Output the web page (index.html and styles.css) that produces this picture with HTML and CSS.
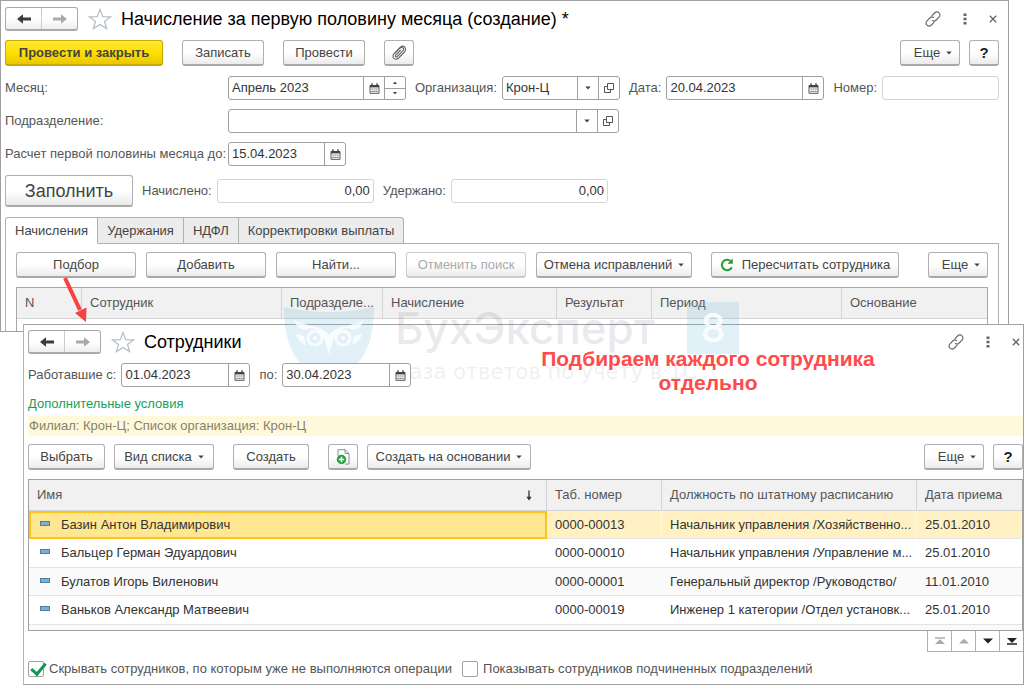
FILE: index.html
```html
<!DOCTYPE html>
<html lang="ru">
<head>
<meta charset="utf-8">
<title>Начисление за первую половину месяца</title>
<link rel="stylesheet" href="styles.css">
</head>
<body>
<svg class="sprite" aria-hidden="true">
  <symbol id="i-left" viewBox="0 0 16 12"><path d="M1 6 7 1.2V4.6H15V7.4H7V10.8Z" fill="currentColor"/></symbol>
  <symbol id="i-right" viewBox="0 0 16 12"><path d="M15 6 9 1.2V4.6H1V7.4H9V10.8Z" fill="currentColor"/></symbol>
  <symbol id="i-star" viewBox="0 0 24 22"><path d="M12 1.5 14.8 8.6 22.4 8.9 16.5 13.5 18.6 20.6 12 16.5 5.4 20.6 7.5 13.5 1.6 8.9 9.2 8.6Z" fill="none" stroke="#b4bcc4" stroke-width="1.2"/></symbol>
  <symbol id="i-cal" viewBox="0 0 11 11"><path d="M1 2.5H10V10.3H1Z" fill="none" stroke="#555"/><path d="M1 2H10V4.4H1Z" fill="#444"/><path d="M3 .3V3M8 .3V3" stroke="#444" stroke-width="1.4"/><path d="M2.5 6H9M2.5 8.3H9" stroke="#555" stroke-width="1.2" stroke-dasharray="1.2 .8"/></symbol>
  <symbol id="i-open" viewBox="0 0 10 10"><path d="M3.5 .5H9.5V6.5H3.5Z" fill="none" stroke="#555"/><path d="M3.5 3.5H.5V9.5H6.5V6.5" fill="none" stroke="#555"/></symbol>
  <symbol id="i-down" viewBox="0 0 6 4"><path d="M.3 .4H5.7L3 3.6Z" fill="#444"/></symbol>
  <symbol id="i-link" viewBox="0 0 16 16"><g fill="none" stroke="#6a6a6a" stroke-width="1.2" stroke-linecap="round"><path d="M7 4.6 9.6 2C11 .6 12.8.6 14 1.9 15.3 3.1 15.3 4.9 14 6.2L11.2 9C10 10.2 8.6 10.3 7.4 9.6"/><path d="M9 11.4 6.4 14C5 15.4 3.2 15.4 2 14.1.7 12.9.7 11.1 2 9.8L4.8 7C6 5.8 7.4 5.7 8.6 6.4"/></g></symbol>
  <symbol id="i-dots" viewBox="0 0 4 12"><path d="M.5 .5H3.5V3H.5ZM.5 4.8H3.5V7.3H.5ZM.5 9.1H3.5V11.6H.5Z" fill="#666"/></symbol>
  <symbol id="i-x" viewBox="0 0 8 8"><path d="M.8 .8 7.2 7.2M7.2 .8 .8 7.2" stroke="#666" stroke-width="1.3"/></symbol>
</svg>

<main class="desktop">
  <section class="window doc">
    <header class="titlebar">
      <div class="nav"><button aria-label="Назад"><svg><use href="#i-left"/></svg></button><button class="off" aria-label="Вперед"><svg><use href="#i-right"/></svg></button></div>
      <svg class="star"><use href="#i-star"/></svg>
      <h1>Начисление за первую половину месяца (создание) *</h1>
      <div class="tools">
        <button aria-label="Ссылка"><svg class="link"><use href="#i-link"/></svg></button>
        <button aria-label="Меню"><svg class="dots"><use href="#i-dots"/></svg></button>
        <button aria-label="Закрыть"><svg class="x"><use href="#i-x"/></svg></button>
      </div>
    </header>

    <div class="bar doc-bar">
      <button class="btn primary">Провести и закрыть</button>
      <button class="btn">Записать</button>
      <button class="btn">Провести</button>
      <button class="btn icon" aria-label="Файлы"><svg width="16" height="16" viewBox="0 0 16 16"><path d="M3.6 8.7 9 3.2C11.2 1.1 13.9 3.7 11.9 5.9L6.2 11.5C5 12.6 3.6 11.2 4.7 10.1L9.8 5M13.6 7 7.6 13C4.2 16 .2 12.2 3 8.7L9.3 2.2C12.6-.6 16.2 3.2 13.6 7" fill="none" stroke="#666" stroke-width="1.1"/></svg></button>
      <span class="push"></span>
      <button class="btn more">Еще<svg class="caret"><use href="#i-down"/></svg></button>
      <button class="btn icon help">?</button>
    </div>

    <div class="row">
      <label class="lead" for="month">Месяц:</label>
      <div class="field w-month"><input id="month" value="Апрель 2023"><button aria-label="Календарь"><svg class="cal"><use href="#i-cal"/></svg></button><span class="spin"><button aria-label="Больше"><svg viewBox="0 0 4 3"><path d="M0 3H4L2 .5Z" fill="#444"/></svg></button><button aria-label="Меньше"><svg viewBox="0 0 4 3"><path d="M0 0H4L2 2.5Z" fill="#444"/></svg></button></span></div>
      <label for="org">Организация:</label>
      <div class="field w-org"><input id="org" value="Крон-Ц"><button aria-label="Список"><svg class="caret"><use href="#i-down"/></svg></button><button aria-label="Открыть"><svg class="open"><use href="#i-open"/></svg></button></div>
      <label for="date">Дата:</label>
      <div class="field w-date"><input id="date" value="20.04.2023"><button aria-label="Календарь"><svg class="cal"><use href="#i-cal"/></svg></button></div>
      <label for="num">Номер:</label>
      <div class="field pale grow"><input id="num"></div>
    </div>
    <div class="row">
      <label class="lead" for="dep">Подразделение:</label>
      <div class="field w-dep"><input id="dep"><button aria-label="Список"><svg class="caret"><use href="#i-down"/></svg></button><button aria-label="Открыть"><svg class="open"><use href="#i-open"/></svg></button></div>
    </div>
    <div class="row">
      <label class="lead" for="till">Расчет первой половины месяца до:</label>
      <div class="field w-till"><input id="till" value="15.04.2023"><button aria-label="Календарь"><svg class="cal"><use href="#i-cal"/></svg></button></div>
    </div>
    <div class="row totals">
      <button class="btn big">Заполнить</button>
      <label for="acc">Начислено:</label>
      <div class="field pale w-sum"><input id="acc" value="0,00"></div>
      <label for="ded">Удержано:</label>
      <div class="field pale w-sum"><input id="ded" value="0,00"></div>
    </div>

    <div class="tabs" role="tablist">
      <button role="tab" aria-selected="true">Начисления</button><button role="tab">Удержания</button><button role="tab">НДФЛ</button><button role="tab">Корректировки выплаты</button>
    </div>
    <div class="panel">
      <div class="bar panel-bar">
        <button class="btn wide">Подбор</button>
        <button class="btn wide">Добавить</button>
        <button class="btn wide">Найти...</button>
        <button class="btn wide" disabled>Отменить поиск</button>
        <button class="btn fix">Отмена исправлений<svg class="caret"><use href="#i-down"/></svg></button>
        <button class="btn recalc"><svg width="14" height="14" viewBox="0 0 14 14"><path d="M11.8 9.2A5.2 5.2 0 1 1 10.5 3" fill="none" stroke="#27a030" stroke-width="2"/><path d="M12.8 .4V5.8H7.4Z" fill="#27a030"/></svg>Пересчитать сотрудника</button>
        <span class="push"></span>
        <button class="btn more">Еще<svg class="caret"><use href="#i-down"/></svg></button>
      </div>
      <div class="sheet">
        <table class="accruals">
          <colgroup><col class="a1"><col class="a2"><col class="a3"><col class="a4"><col class="a5"><col class="a6"><col></colgroup>
          <thead><tr><th>N</th><th>Сотрудник</th><th>Подразделе...</th><th>Начисление</th><th>Результат</th><th>Период</th><th>Основание</th></tr></thead>
        </table>
      </div>
    </div>
  </section>

  <section class="window picker">
    <header class="titlebar">
      <div class="nav"><button aria-label="Назад"><svg><use href="#i-left"/></svg></button><button class="off" aria-label="Вперед"><svg><use href="#i-right"/></svg></button></div>
      <svg class="star"><use href="#i-star"/></svg>
      <h2>Сотрудники</h2>
      <div class="tools">
        <button aria-label="Ссылка"><svg class="link"><use href="#i-link"/></svg></button>
        <button aria-label="Меню"><svg class="dots"><use href="#i-dots"/></svg></button>
        <button aria-label="Закрыть"><svg class="x"><use href="#i-x"/></svg></button>
      </div>
    </header>
    <div class="row period">
      <label for="from">Работавшие с:</label>
      <div class="field w-day"><input id="from" value="01.04.2023"><button aria-label="Календарь"><svg class="cal"><use href="#i-cal"/></svg></button></div>
      <label for="to">по:</label>
      <div class="field w-day"><input id="to" value="30.04.2023"><button aria-label="Календарь"><svg class="cal"><use href="#i-cal"/></svg></button></div>
    </div>
    <a class="extra" href="#">Дополнительные условия</a>
    <p class="filter">Филиал: Крон-Ц; Список организация: Крон-Ц</p>
    <div class="bar picker-bar">
      <button class="btn">Выбрать</button>
      <button class="btn view">Вид списка<svg class="caret"><use href="#i-down"/></svg></button>
      <button class="btn">Создать</button>
      <button class="btn icon" aria-label="Создать копированием"><svg width="16" height="16" viewBox="0 0 16 16"><path d="M3 7V.7H10L14 4.5V15H10" fill="#fff" stroke="#7890a0"/><path d="M10 .7V4.5H14" fill="none" stroke="#7890a0"/><circle cx="6.5" cy="10.5" r="4.7" fill="#27a03c"/><path d="M6.5 7.8V13.2M3.8 10.5H9.2" stroke="#fff" stroke-width="1.6"/></svg></button>
      <button class="btn based">Создать на основании<svg class="caret"><use href="#i-down"/></svg></button>
      <span class="push"></span>
      <button class="btn more">Еще<svg class="caret"><use href="#i-down"/></svg></button>
      <button class="btn icon help">?</button>
    </div>
    <div class="list">
      <table class="staff">
        <colgroup><col><col class="s2"><col class="s3"><col class="s4"></colgroup>
        <thead><tr><th><span class="sorted">Имя<svg width="8" height="11" viewBox="0 0 8 11"><path d="M4 .5V9" stroke="#333" stroke-width="1.3"/><path d="M1.3 6.8H6.7L4 10.5Z" fill="#333"/></svg></span></th><th>Таб. номер</th><th>Должность по штатному расписанию</th><th>Дата приема</th></tr></thead>
        <tbody>
          <tr class="current"><td><i class="mark"></i>Базин Антон Владимирович</td><td>0000-00013</td><td>Начальник управления /Хозяйственно...</td><td>25.01.2010</td></tr>
          <tr><td><i class="mark"></i>Бальцер Герман Эдуардович</td><td>0000-00010</td><td>Начальник управления /Управление м...</td><td>25.01.2010</td></tr>
          <tr><td><i class="mark"></i>Булатов Игорь Виленович</td><td>0000-00001</td><td>Генеральный директор /Руководство/</td><td>11.01.2010</td></tr>
          <tr><td><i class="mark"></i>Ваньков Александр Матвеевич</td><td>0000-00019</td><td>Инженер 1 категории /Отдел установк...</td><td>25.01.2010</td></tr>
        </tbody>
      </table>
    </div>
    <div class="pager">
      <button disabled aria-label="В начало"><svg viewBox="0 0 10 8"><path d="M0 1H10" stroke="#aaa" stroke-width="1.5"/><path d="M0 7H10L5 2.3Z" fill="#aaa"/></svg></button><button disabled aria-label="Вверх"><svg viewBox="0 0 10 8"><path d="M0 6.5H10L5 1.8Z" fill="#aaa"/></svg></button><button aria-label="Вниз"><svg viewBox="0 0 10 8"><path d="M0 1.5H10L5 6.5Z" fill="#222"/></svg></button><button aria-label="В конец"><svg viewBox="0 0 10 8"><path d="M0 7H10" stroke="#222" stroke-width="1.5"/><path d="M0 1H10L5 6Z" fill="#222"/></svg></button>
    </div>
    <div class="checks">
      <label><input type="checkbox" checked>Скрывать сотрудников, по которым уже не выполняются операции</label>
      <label><input type="checkbox">Показывать сотрудников подчиненных подразделений</label>
    </div>
  </section>

  <div class="watermark" aria-hidden="true">
    <svg width="90" height="76" viewBox="0 0 90 76"><path d="M0 0Q45 10 90 0C90 36 80 62 45 76 10 62 0 36 0 0Z" fill="#6db3dc" fill-opacity=".2"/><g fill="none" stroke="#fff" stroke-opacity=".8"><circle cx="31" cy="31" r="7" stroke-width="3"/><circle cx="59" cy="31" r="7" stroke-width="3"/></g><g fill="#fff" fill-opacity=".8"><path d="M10 13C22 20 36 17 45 28 54 17 68 20 80 13 77 20 73 23 69 23 61 18 52 24 49 34L45 48 41 34C38 24 29 18 21 23 16 22 12 19 10 13Z"/><path d="M12 27 20 29 22 38Q14 35 12 27ZM78 27 70 29 68 38Q76 35 78 27Z"/><circle cx="31" cy="31" r="2"/><circle cx="59" cy="31" r="2"/></g></svg>
    <div class="brand"><div class="name">БухЭксперт<span class="eight">8</span></div><div class="motto">База ответов по учету в 1С</div></div>
  </div>
  <p class="note">Подбираем каждого сотрудника отдельно</p>
  <svg class="arrow" width="30" height="48" viewBox="0 0 30 48" aria-hidden="true"><path d="M4 2 19 34" stroke="#f94144" stroke-width="4"/><path d="M14 37 25.5 31.5 25 46Z" fill="#f94144"/></svg>
</main>
</body>
</html>
```
FILE: styles.css
```css
* { box-sizing: border-box; }
body { margin: 0; background: #fff; color: #444; font: 13px/16px "Liberation Sans", Arial, sans-serif; }
button, input { font: inherit; color: inherit; margin: 0; }
button { display: flex; align-items: center; justify-content: center; padding: 0; border: 0; background: none; white-space: nowrap; }
button svg { flex-shrink: 0; }
h1, h2, p { margin: 0; }
label { color: #555; white-space: nowrap; }
.sprite { display: none; }

.desktop { position: relative; min-height: 100vh; overflow: hidden; }
.window { background: #fff; border: 1px solid #a0a0a0; }
.doc { margin-right: 15px; padding: 6px 9px 0 4px; }
.picker { position: absolute; top: 324px; left: 23px; right: 0; bottom: 0; padding: 5px 0 0 4px; border-left-color: #b4b4b4; }

.titlebar { display: flex; align-items: center; height: 24px; }
.titlebar h1, .titlebar h2 { flex: 1; color: #000; font-size: 18px; line-height: 24px; font-weight: 400; }
.nav { display: flex; width: 73px; height: 24px; border: 1px solid #aaa; border-bottom-width: 2px; border-radius: 3px; background: linear-gradient(#fff 50%, #eee); }
.nav button { flex: 1; color: #3c3c3c; }
.nav button + button { border-left: 1px solid #ccc; }
.nav .off { color: #aaa; }
.nav svg { width: 16px; height: 12px; }
.star { width: 24px; height: 22px; margin: 0 9px 0 10px; }
.tools { display: flex; align-items: center; gap: 22px; padding-right: 2px; }
.link { width: 16px; height: 16px; }
.dots { width: 4px; height: 12px; }
.x { width: 8px; height: 8px; }

.bar { display: flex; align-items: center; }
.push { flex: 1; }
.btn { height: 26px; padding: 0 12px; border: 1px solid #b0b0b0; border-bottom: 2px solid #a8a8a8; border-radius: 3px; background: linear-gradient(#fff 50%, #ebebeb); color: #444; }
.btn:disabled { color: #aaa; border-color: #ccc; }
.btn .caret { margin-left: 6px; }
.caret { width: 6px; height: 4px; }
.primary { width: 158px; background: linear-gradient(#ffe833, #ffdf00 50%, #e8c800); border-color: #c8aa00; font-weight: 700; }
.icon { width: 30px; padding: 0; }
.help { color: #222; font-size: 15px; font-weight: 700; }
.more { width: 60px; padding: 0 0 0 6px; }
.doc-bar { margin-top: 9px; margin-bottom: 10px; gap: 19px; }
.doc-bar .more { margin-right: -10px; }
.doc-bar .btn:nth-child(2), .doc-bar .btn:nth-child(3) { width: 82px; }

.row { display: flex; align-items: center; gap: 9px; margin-bottom: 9px; }
.row label { margin-right: -4px; }
.row .lead { width: 218px; }
.field { display: flex; height: 24px; border: 1px solid #a0a0a0; border-radius: 3px; background: #fff; }
.field input { flex: 1; width: 0; min-width: 0; padding: 0 3px; border: 0; background: none; color: #333; outline: 0; }
.field > button { width: 21px; border-left: 1px solid #a0a0a0; }
.pale { border-color: #d4d4d4; }
.grow { flex: 1; }
.cal { width: 11px; height: 11px; }
.open { width: 10px; height: 10px; }
.spin { display: flex; flex-direction: column; width: 21px; border-left: 1px solid #a0a0a0; }
.spin button { flex: 1; }
.spin button + button { border-top: 1px solid #a0a0a0; }
.spin svg { width: 4px; height: 3px; }
.w-month { width: 178px; }
.w-org { width: 118px; }
.w-date { width: 158px; }
.w-dep { width: 391px; }
.w-till { width: 118px; }
.w-sum { width: 157px; }
.w-sum input { text-align: right; }
.w-day { width: 129px; }
.big { width: 128px; height: 32px; font-size: 18px; }
.totals { margin-bottom: 10px; }

.tabs { display: flex; }
.tabs button { position: relative; height: 27px; padding: 0 9px; border: 1px solid #b0b0b0; border-left-width: 0; background: #ececec; color: #444; }
.tabs button:first-child { border-left-width: 1px; border-bottom-color: #fff; background: #fff; border-top-left-radius: 3px; }
.tabs button:last-child { border-top-right-radius: 3px; }
.panel { margin-top: -1px; padding: 8px 10px 0; border: 1px solid #b0b0b0; border-bottom: 0; }
.panel-bar { gap: 10px; margin-bottom: 9px; }
.wide { width: 120px; }
.fix { width: 156px; }
.recalc { width: 188px; margin-left: 9px; gap: 8px; padding: 0; }
.sheet { padding-bottom: 12px; border: 1px solid #a8a8a8; border-bottom: 0; }

table { width: 100%; table-layout: fixed; border-collapse: separate; border-spacing: 0; }
th, td { padding: 0 2px 0 8px; overflow: hidden; text-align: left; text-overflow: ellipsis; white-space: nowrap; font-weight: 400; }
th { height: 31px; background: #f1f1f1; border-right: 1px solid #d4d4d4; border-bottom: 1px solid #d4d4d4; color: #555; }
th:last-child { border-right: 0; }
.a1 { width: 65px; }
.a2 { width: 200px; }
.a3 { width: 101px; }
.a4 { width: 174px; }
.a5 { width: 95px; }
.a6 { width: 190px; }

.picker .tools { padding-right: 3px; }
.period { margin: 9px 0; }
.period .field { position: relative; z-index: 1; }
.extra { display: block; width: max-content; color: #14a05a; text-decoration: none; }
.filter { margin-top: 4px; padding: 2px 1px; background: #fff9dc; color: #8a8068; }
.picker-bar { margin: 8px 0 9px; gap: 9px; }
.picker-bar .btn:nth-child(1) { width: 77px; }
.picker-bar .btn:nth-child(3) { width: 76px; margin: 0 10px; }
.view { width: 100px; }
.based { width: 164px; }
.list { height: 152px; overflow: hidden; border: 1px solid #a0a0a0; background: #fafafa; }
.staff td { height: 28px; border-bottom: 1px solid #e4e4e4; background: #fff; color: #333; }
.staff tr:nth-child(even) td { height: 29px; }
.staff tr:nth-child(3) td { background: #fafafa; }
.staff .current td { background: #fff1c4; border-right: 1px solid #fff9e0; }
.staff .current td:first-child { padding-left: 6px; background: #ffe690; border: 2px solid #fcc419; }
.s2 { width: 115px; }
.s3 { width: 255px; }
.s4 { width: 105px; }
.sorted { display: flex; align-items: center; justify-content: space-between; padding-right: 11px; }
.mark { display: inline-block; width: 10px; height: 5px; margin: 0 11px 3px 3px; border: 1px solid #4f7f9f; background: #7fb0d4; }
.pager { display: flex; justify-content: flex-end; }
.pager button { width: 24px; height: 21px; border: 1px solid #b0b0b0; border-width: 0 0 1px 1px; }
.pager svg { width: 10px; height: 8px; }
.checks { display: flex; gap: 10px; margin-top: 9px; }
.checks label { display: flex; align-items: center; gap: 5px; }
.checks input { appearance: none; width: 16px; height: 16px; border: 1px solid #a0a0a0; border-radius: 2px; background: #fff; }
.checks input:checked { position: relative; }
.checks input:checked::after { content: ""; position: absolute; left: 5px; top: -2px; width: 6px; height: 12px; border: solid #0c9a50; border-width: 0 3px 3px 0; transform: rotate(40deg); }

.watermark { position: absolute; top: 302px; left: 284px; display: flex; gap: 21px; padding-top: 5px; pointer-events: none; font-family: Inter, "Open Sans", sans-serif; }
.brand { width: 344px; margin-top: -5px; white-space: nowrap; color: rgba(90, 90, 120, .14); }
.name { display: flex; align-items: center; justify-content: space-between; font-size: 44px; line-height: 52px; font-weight: 500; }
.eight { width: 52px; height: 52px; background: rgba(109, 179, 220, .2); color: rgba(255, 255, 255, .85); text-align: center; font-size: 40px; font-weight: 500; }
.motto { margin-top: 5px; color: rgba(90, 90, 120, .1); font-family: "DejaVu Sans", sans-serif; font-size: 21px; line-height: 26px; }
.note { position: absolute; top: 347px; left: 518px; width: 380px; color: #ff4b4b; text-align: center; font-size: 21px; line-height: 24px; font-weight: 700; }
.arrow { position: absolute; top: 276px; left: 61px; }
```
